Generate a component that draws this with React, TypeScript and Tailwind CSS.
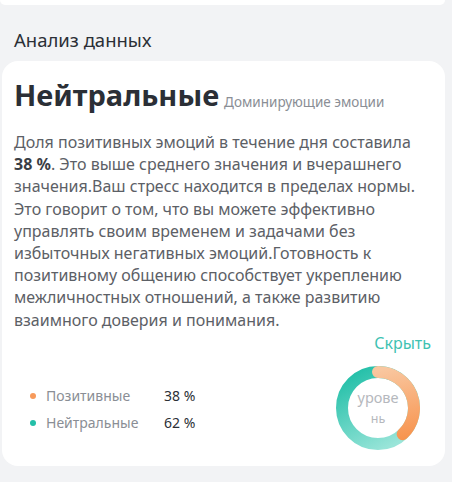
import React from 'react';

const POSITIVE = 38;

const Donut = () => {
  const r = 36;
  const cx = 43;
  const angle = -90 + (POSITIVE / 100) * 360;
  const ex = cx + r * Math.cos((angle * Math.PI) / 180);
  const ey = cx + r * Math.sin((angle * Math.PI) / 180);
  return (
    <div className="relative w-[86px] h-[86px]">
      <svg width="86" height="86" viewBox="0 0 86 86">
        <defs>
          <linearGradient id="teal" gradientUnits="userSpaceOnUse" x1="10" y1="10" x2="50" y2="85">
            <stop offset="0%" stopColor="#22bfa8" />
            <stop offset="100%" stopColor="#9ae5d9" />
          </linearGradient>
          <linearGradient id="orange" gradientUnits="userSpaceOnUse" x1="43" y1="5" x2="60" y2="80">
            <stop offset="0%" stopColor="#f9c7a0" />
            <stop offset="100%" stopColor="#f7914a" />
          </linearGradient>
        </defs>
        <circle cx={cx} cy={cx} r={r} fill="none" stroke="url(#teal)" strokeWidth="12" />
        <path
          d={`M ${cx} ${cx - r} A ${r} ${r} 0 0 1 ${ex} ${ey}`}
          fill="none"
          stroke="url(#orange)"
          strokeWidth="12"
          strokeLinecap="round"
        />
      </svg>
      <div className="absolute inset-0 flex flex-col items-center justify-center text-[14.5px] leading-[21px] text-[#b5b8bd]">
        <span>урове</span>
        <span className="text-[12.5px]">нь</span>
      </div>
    </div>
  );
};

const App = () => {
  return (
    <div
      className="w-[452px] h-[482px] overflow-hidden bg-[#f2f3f5]"
      style={{ fontFamily: '"Noto Sans", "Open Sans", sans-serif' }}
    >
      {/* Previous card bottom */}
      <div className="w-[445px] h-[5px] bg-white rounded-b-[16px]" />

      <div className="px-[14px] pt-[22px] pb-[9px] text-[18.5px] leading-[25px] text-[#2b2f36]">
        Анализ данных
      </div>

      <div className="ml-[2px] w-[443px] bg-white rounded-[16px] pl-[12px] pr-[14px] pt-[16px] pb-[15px]">
        <div className="flex items-end gap-[5px]">
          <span className="text-[29px] leading-[36px] font-bold text-[#2b2f36]">Нейтральные</span>
          <span className="text-[13.5px] leading-[22px] text-[#8a8e95]">Доминирующие эмоции</span>
        </div>

        <p className="mt-[18px] text-[16px] leading-[22.2px] text-[#5c6066]">
          Доля позитивных эмоций в течение дня составила{' '}
          <b className="font-bold text-[#3a3e45]">38 %</b>. Это выше среднего значения и вчерашнего
          значения.Ваш стресс находится в пределах нормы. Это говорит о том, что вы можете
          эффективно управлять своим временем и задачами без избыточных негативных
          эмоций.Готовность к позитивному общению способствует укреплению межличностных
          отношений, а также развитию взаимного доверия и понимания.
        </p>

        <div className="flex justify-end">
          <span className="text-[16px] leading-[24px] text-[#3fc2b2]">Скрыть</span>
        </div>

        <div className="flex items-center justify-between mt-[10px] pr-[10px]">
          <div className="flex flex-col gap-[5px] pl-[16px] pt-[4px]">
            <div className="flex items-center text-[14px] leading-[22px]">
              <span className="w-[6px] h-[6px] rounded-full bg-[#f79a5b]" />
              <span className="ml-[10px] w-[118px] text-[#8a8e95]">Позитивные</span>
              <span className="text-[#2b2f36]">38 %</span>
            </div>
            <div className="flex items-center text-[14px] leading-[22px]">
              <span className="w-[6px] h-[6px] rounded-full bg-[#23bfa8]" />
              <span className="ml-[10px] w-[118px] text-[#8a8e95]">Нейтральные</span>
              <span className="text-[#2b2f36]">62 %</span>
            </div>
          </div>
          <Donut />
        </div>
      </div>
    </div>
  );
};

export default App;
